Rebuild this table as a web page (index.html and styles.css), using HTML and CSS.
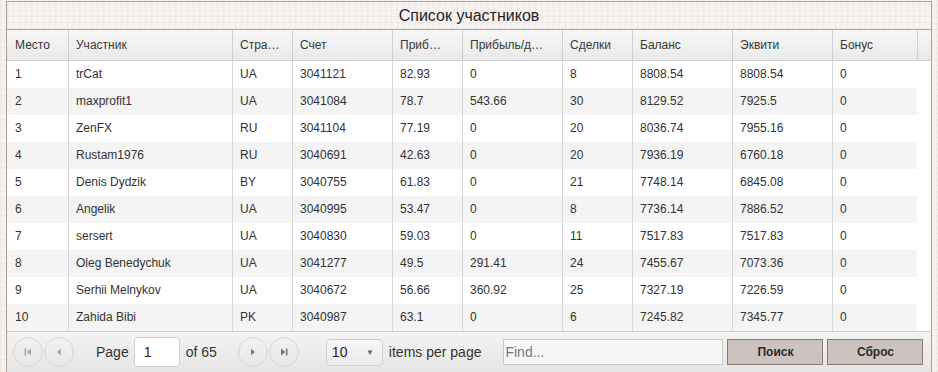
FILE: index.html
```html
<!DOCTYPE html>
<html lang="ru">
<head>
<meta charset="utf-8">
<title>Список участников</title>
<link rel="stylesheet" href="styles.css">
</head>
<body>
<div class="panel">
  <div class="title">Список участников</div>
  <div class="grid">
    <div class="row head">
      <div class="cell">Место</div>
      <div class="cell">Участник</div>
      <div class="cell">Стра…</div>
      <div class="cell">Счет</div>
      <div class="cell">Приб…</div>
      <div class="cell">Прибыль/д…</div>
      <div class="cell">Сделки</div>
      <div class="cell">Баланс</div>
      <div class="cell">Эквити</div>
      <div class="cell">Бонус</div>
      <div class="cell gutter"></div>
    </div>
    <div class="row"><div class="cell">1</div><div class="cell">trCat</div><div class="cell">UA</div><div class="cell">3041121</div><div class="cell">82.93</div><div class="cell">0</div><div class="cell">8</div><div class="cell">8808.54</div><div class="cell">8808.54</div><div class="cell">0</div><div class="cell gutter"></div></div>
    <div class="row alt"><div class="cell">2</div><div class="cell">maxprofit1</div><div class="cell">UA</div><div class="cell">3041084</div><div class="cell">78.7</div><div class="cell">543.66</div><div class="cell">30</div><div class="cell">8129.52</div><div class="cell">7925.5</div><div class="cell">0</div><div class="cell gutter"></div></div>
    <div class="row"><div class="cell">3</div><div class="cell">ZenFX</div><div class="cell">RU</div><div class="cell">3041104</div><div class="cell">77.19</div><div class="cell">0</div><div class="cell">20</div><div class="cell">8036.74</div><div class="cell">7955.16</div><div class="cell">0</div><div class="cell gutter"></div></div>
    <div class="row alt"><div class="cell">4</div><div class="cell">Rustam1976</div><div class="cell">RU</div><div class="cell">3040691</div><div class="cell">42.63</div><div class="cell">0</div><div class="cell">20</div><div class="cell">7936.19</div><div class="cell">6760.18</div><div class="cell">0</div><div class="cell gutter"></div></div>
    <div class="row"><div class="cell">5</div><div class="cell">Denis Dydzik</div><div class="cell">BY</div><div class="cell">3040755</div><div class="cell">61.83</div><div class="cell">0</div><div class="cell">21</div><div class="cell">7748.14</div><div class="cell">6845.08</div><div class="cell">0</div><div class="cell gutter"></div></div>
    <div class="row alt"><div class="cell">6</div><div class="cell">Angelik</div><div class="cell">UA</div><div class="cell">3040995</div><div class="cell">53.47</div><div class="cell">0</div><div class="cell">8</div><div class="cell">7736.14</div><div class="cell">7886.52</div><div class="cell">0</div><div class="cell gutter"></div></div>
    <div class="row"><div class="cell">7</div><div class="cell">sersert</div><div class="cell">UA</div><div class="cell">3040830</div><div class="cell">59.03</div><div class="cell">0</div><div class="cell">11</div><div class="cell">7517.83</div><div class="cell">7517.83</div><div class="cell">0</div><div class="cell gutter"></div></div>
    <div class="row alt"><div class="cell">8</div><div class="cell">Oleg Benedychuk</div><div class="cell">UA</div><div class="cell">3041277</div><div class="cell">49.5</div><div class="cell">291.41</div><div class="cell">24</div><div class="cell">7455.67</div><div class="cell">7073.36</div><div class="cell">0</div><div class="cell gutter"></div></div>
    <div class="row"><div class="cell">9</div><div class="cell">Serhii Melnykov</div><div class="cell">UA</div><div class="cell">3040672</div><div class="cell">56.66</div><div class="cell">360.92</div><div class="cell">25</div><div class="cell">7327.19</div><div class="cell">7226.59</div><div class="cell">0</div><div class="cell gutter"></div></div>
    <div class="row alt"><div class="cell">10</div><div class="cell">Zahida Bibi</div><div class="cell">PK</div><div class="cell">3040987</div><div class="cell">63.1</div><div class="cell">0</div><div class="cell">6</div><div class="cell">7245.82</div><div class="cell">7345.77</div><div class="cell">0</div><div class="cell gutter"></div></div>
  </div>
  <div class="pager">
    <button class="circle first" aria-label="First page"><svg width="8" height="8" viewBox="0 0 8 8"><rect x="0.5" y="0.5" width="1.6" height="7" fill="#a8a8a8"/><path d="M7 0.5 L2.6 4 L7 7.5 Z" fill="#a8a8a8"/></svg></button>
    <button class="circle" aria-label="Previous page"><svg width="8" height="8" viewBox="0 0 8 8"><path d="M6 0.8 L2 4 L6 7.2 Z" fill="#a8a8a8"/></svg></button>
    <span class="label page-label">Page</span>
    <input class="page-input" type="text" value="1">
    <span class="label of-label">of 65</span>
    <button class="circle next" aria-label="Next page"><svg width="8" height="8" viewBox="0 0 8 8"><path d="M2 0.8 L6 4 L2 7.2 Z" fill="#777"/></svg></button>
    <button class="circle" aria-label="Last page"><svg width="8" height="8" viewBox="0 0 8 8"><path d="M1 0.5 L5.4 4 L1 7.5 Z" fill="#777"/><rect x="5.9" y="0.5" width="1.6" height="7" fill="#777"/></svg></button>
    <div class="select"><span>10</span><span class="arrow">▼</span></div>
    <span class="label items-label">items per page</span>
    <input class="find" type="text" placeholder="Find...">
    <button class="action search">Поиск</button>
    <button class="action reset">Сброс</button>
  </div>
</div>
</body>
</html>
```
FILE: styles.css
```css
* { box-sizing: border-box; }

html, body {
  margin: 0;
  height: 100%;
}

body {
  padding-top: 1px;
  font-family: "Liberation Sans", Arial, sans-serif;
  color: #333;
  background-color: #f6f2ef;
  background-image:
    repeating-linear-gradient(0deg, rgba(205, 190, 180, 0.16) 0 1px, transparent 1px 6px),
    repeating-linear-gradient(90deg, rgba(205, 190, 180, 0.16) 0 1px, transparent 1px 6px);
}

.panel {
  margin: 0 6px;
  border: 1px solid #a99e98;
  background: #fff;
}

.title {
  height: 28px;
  line-height: 27px;
  text-align: center;
  font-size: 16px;
  color: #1f1f2a;
  border-bottom: 1px solid #b0a6a0;
  background-color: #f7f3f0;
  background-image:
    repeating-linear-gradient(0deg, rgba(210, 196, 186, 0.18) 0 1px, transparent 1px 6px),
    repeating-linear-gradient(90deg, rgba(210, 196, 186, 0.18) 0 1px, transparent 1px 6px);
}

.row {
  display: grid;
  grid-template-columns: 61px 164px 60px 100px 70px 100px 70px 100px 100px 85px 14px;
  height: 27px;
  font-size: 12px;
}

.row.head {
  height: 31px;
  border-bottom: 1px solid #cfcfcf;
  background: linear-gradient(#f7f7f7, #e9e9e9);
  color: #383838;
}

.cell {
  padding: 0 6px 0 7px;
  border-left: 1px solid #d6d6d6;
  line-height: 27px;
  white-space: nowrap;
  overflow: hidden;
  text-overflow: ellipsis;
}

.head .cell {
  line-height: 31px;
  border-left-color: #d0d0d0;
}

.cell:first-child {
  border-left: 0;
  padding-left: 8px;
}

.row .gutter { border-left: 0; background: #fff; }
.head .gutter { border-left: 1px solid #d0d0d0; background: transparent; }

.row.alt .cell { background: #f4f4f4; }
.row.alt .gutter { background: #fff; }

.pager {
  display: flex;
  align-items: center;
  height: 41px;
  border-top: 1px solid #cdcdcd;
  background: linear-gradient(#f3f3f3, #e6e6e6);
  padding-left: 6px;
  font-size: 14px;
  color: #333;
}

.circle {
  width: 30px;
  height: 30px;
  margin: 0 0 0 1px;
  padding: 0;
  border: 1px solid #d6d6d6;
  border-radius: 50%;
  background: transparent;
  display: flex;
  align-items: center;
  justify-content: center;
}

.circle.first { margin-left: 0; }
.circle.next { margin-left: 21px; }

.label { white-space: nowrap; }
.page-label { margin-left: 22px; }
.of-label { margin-left: 6px; }
.items-label { margin-left: 6px; }

.page-input {
  margin-left: 5px;
  width: 46px;
  height: 30px;
  border: 1px solid #cfcfcf;
  border-radius: 4px;
  padding: 0 9px;
  font: 14px "Liberation Sans", Arial, sans-serif;
  color: #222;
  background: #fff;
}

.select {
  margin-left: 27px;
  width: 57px;
  height: 27px;
  border: 1px solid #cfcfcf;
  border-radius: 4px;
  background: linear-gradient(#f6f6f6, #ebebeb);
  display: flex;
  align-items: center;
  justify-content: space-between;
  padding: 0 8px 0 5px;
  color: #222;
}

.select .arrow {
  font-size: 8px;
  color: #666;
}

.find {
  margin-left: 22px;
  width: 220px;
  height: 26px;
  border: 1px solid #c9c9c9;
  background: #f7f7f7;
  padding: 0 1px;
  font: 14px "Liberation Sans", Arial, sans-serif;
  color: #333;
}

.find::placeholder { color: #7a7a7a; }

.action {
  margin-left: 4px;
  width: 96px;
  height: 26px;
  border: 1px solid #8c7a72;
  background: #cdc3be;
  font: bold 12px "Liberation Sans", Arial, sans-serif;
  color: #2a2a2a;
  padding: 0;
}
```
